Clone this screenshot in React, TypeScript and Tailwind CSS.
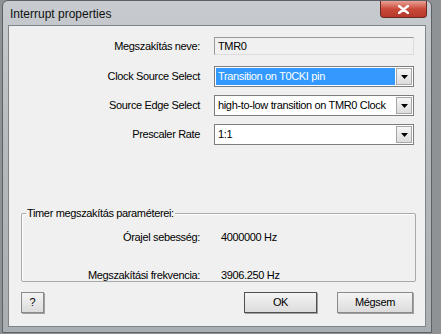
import React from "react";

function DropArrow() {
  return (
    <div className="flex h-full w-[16px] items-center justify-center border border-[#a7a7a7] bg-gradient-to-b from-[#f6f6f6] to-[#dcdcdc]">
      <svg width="7" height="4" viewBox="0 0 7 4">
        <path d="M0 0h7L3.5 4z" fill="#000" />
      </svg>
    </div>
  );
}

function Combo({ value, selected }: { value: string; selected?: boolean }) {
  return (
    <div className="flex h-[21px] w-[200px] items-stretch gap-[1px] border border-[#7d7d7d] bg-white p-[1px]">
      <div
        className={
          "flex min-w-0 flex-1 items-center overflow-hidden whitespace-nowrap pl-[2px] " +
          (selected ? "bg-[#3399ff] text-white" : "text-black")
        }
      >
        {value}
      </div>
      <DropArrow />
    </div>
  );
}

function Row({ label, children }: { label: string; children: React.ReactNode }) {
  return (
    <div className="flex items-center">
      <div className="w-[191px] whitespace-nowrap text-right">{label}</div>
      <div className="ml-[14px]">{children}</div>
    </div>
  );
}

function Btn({ label, w, def }: { label: string; w: string; def?: boolean }) {
  return (
    <div
      className={
        "flex h-[21px] items-center justify-center border bg-gradient-to-b from-[#f4f4f4] to-[#dcdcdc] shadow-[1px_1px_0_#a0a0a0] " +
        w +
        (def ? " border-[#505050]" : " border-[#8a8a8a]")
      }
    >
      {label}
    </div>
  );
}

export default function App() {
  return (
    <div
      className="h-[334px] w-[441px] overflow-hidden bg-[#8f9294] text-[11px] tracking-[-0.35px] text-black"
      style={{ fontFamily: '"Liberation Sans", Arial, sans-serif' }}
    >
      <div className="ml-[2px] flex h-[333px] w-[430px] flex-col rounded-t-[6px] border border-[#5e6266] bg-gradient-to-b from-[#c7cbcf] via-[#b3b8bd] to-[#a9aeb3]">
        {/* title bar */}
        <div className="flex h-[24px] items-start justify-between">
          <div className="pl-[7px] pt-[4px] text-[12px] tracking-normal text-[#111]">Interrupt properties</div>
          <div className="mr-[4px] flex h-[17px] w-[47px] items-center justify-center rounded-b-[4px] border border-t-0 border-[#6b2a22] bg-gradient-to-b from-[#e8a093] via-[#c9493a] to-[#b53a2b]">
            <svg width="11" height="9" viewBox="0 0 11 9">
              <path d="M1 1l9 7M10 1L1 8" stroke="#fff" strokeWidth="2.4" strokeLinecap="round" />
            </svg>
          </div>
        </div>

        {/* client area */}
        <div className="mx-[5px] flex h-[302px] flex-col border border-[#7f8489] bg-[#f0f0f0] pt-[11px]">
          <Row label="Megszakítás neve:">
            <div className="flex h-[18px] w-[200px] items-center border border-[#9a9a9a] border-b-[#dcdcdc] border-r-[#dcdcdc] bg-[#f0f0f0] pl-[3px]">
              TMR0
            </div>
          </Row>
          <div className="mt-[11px] flex flex-col gap-[8px]">
            <Row label="Clock Source Select">
              <Combo value="Transition on T0CKI pin" selected />
            </Row>
            <Row label="Source Edge Select">
              <Combo value="high-to-low transition on TMR0 Clock" />
            </Row>
            <Row label="Prescaler Rate">
              <Combo value="1:1" />
            </Row>
          </div>

          {/* group box */}
          <div className="relative ml-[12px] mt-[68px] h-[69px] w-[395px] rounded-[2px] border border-[#a9a9a9] shadow-[inset_1px_1px_0_#fff]">
            <div className="absolute left-[4px] top-[-7px] bg-[#f0f0f0] px-[1px] leading-[13px]">
              Timer megszakítás paraméterei:
            </div>
            <div className="flex flex-col pt-[15px]">
              <div className="flex">
                <div className="w-[178px] text-right">Órajel sebesség:</div>
                <div className="ml-[21px]">4000000 Hz</div>
              </div>
              <div className="mt-[21px] flex">
                <div className="w-[178px] text-right">Megszakítási frekvencia:</div>
                <div className="ml-[21px]">3906.250 Hz</div>
              </div>
            </div>
          </div>

          {/* buttons */}
          <div className="mt-[10px] flex items-center pl-[12px]">
            <Btn label="?" w="w-[23px]" />
            <div className="flex-1" />
            <Btn label="OK" w="w-[73px]" def />
            <div className="w-[20px]" />
            <Btn label="Mégsem" w="w-[76px]" />
            <div className="w-[12px]" />
          </div>
        </div>
      </div>
    </div>
  );
}
